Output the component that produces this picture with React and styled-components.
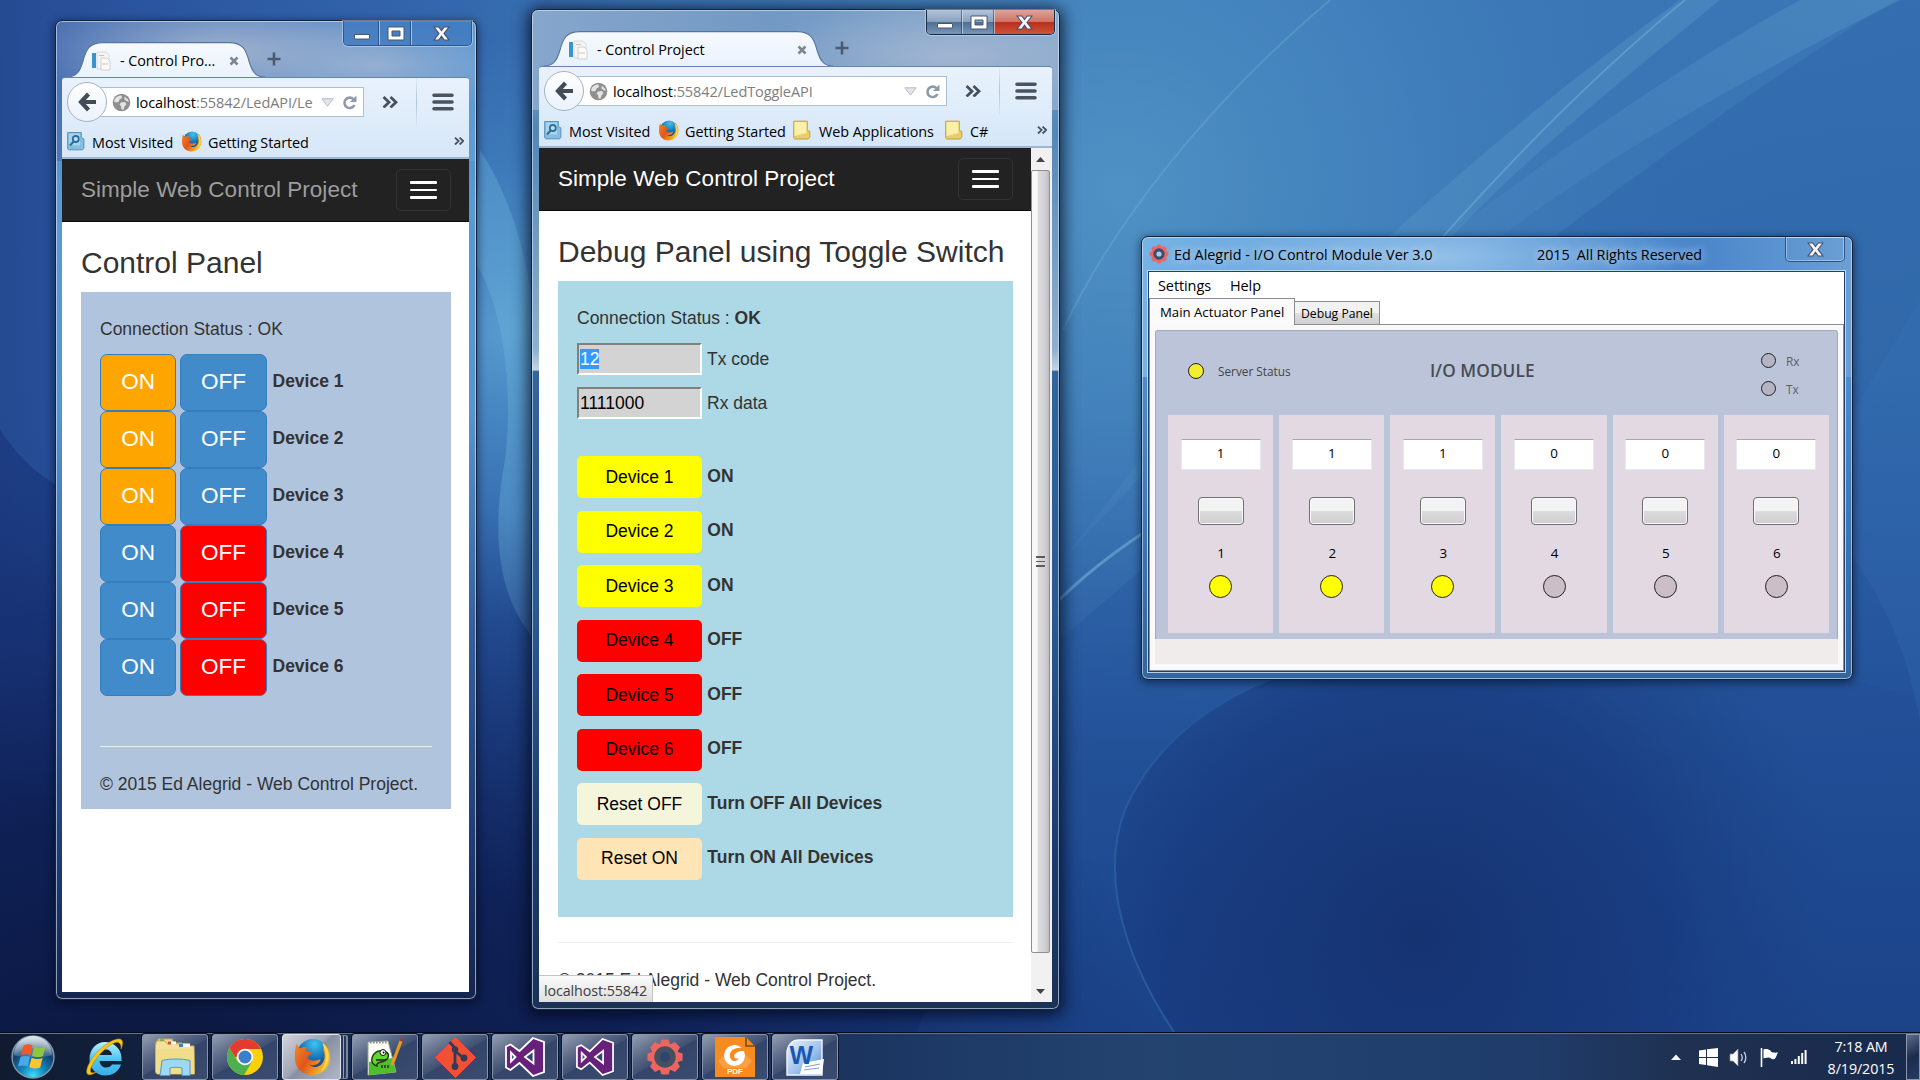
import React from "react";
import styled, { createGlobalStyle, css } from "styled-components";

const GlobalStyle = createGlobalStyle`
  *, *::before, *::after { box-sizing: border-box; }
  html, body { margin: 0; padding: 0; overflow: hidden; background: #12275f; }
  svg { display: block; flex: none; }
`;

const uiFont = css`
  font-family: "Open Sans", "Noto Sans", sans-serif;
`;
const webFont = css`
  font-family: "Liberation Sans", Arial, sans-serif;
`;

/* ---------- desktop ---------- */

const Desktop = styled.div`
  position: relative;
  width: 1920px;
  height: 1080px;
  overflow: hidden;
  display: flex;
  flex-direction: column;
`;

const WallpaperSvg = styled.svg`
  position: absolute;
  inset: 0;
`;

const WorkArea = styled.main`
  position: relative;
  flex: 1;
  min-height: 0;
`;

function Wallpaper() {
  return (
    <WallpaperSvg width="1920" height="1080" viewBox="0 0 1920 1080">
      <defs>
        <linearGradient id="wpBase" x1="0" y1="0" x2="0" y2="1">
          <stop offset="0" stopColor="#3a75b5" />
          <stop offset=".35" stopColor="#3873b2" />
          <stop offset=".62" stopColor="#28589e" />
          <stop offset=".85" stopColor="#1b4388" />
          <stop offset="1" stopColor="#163473" />
        </linearGradient>
        <linearGradient id="wpLeft" x1="0" y1="0" x2="1" y2="0">
          <stop offset="0" stopColor="#23468f" stopOpacity=".9" />
          <stop offset=".6" stopColor="#284f9f" stopOpacity=".5" />
          <stop offset="1" stopColor="#25499a" stopOpacity="0" />
        </linearGradient>
        <radialGradient id="wpGlow" gradientUnits="userSpaceOnUse" cx="1120" cy="190" r="560">
          <stop offset="0" stopColor="#5fa5cf" stopOpacity=".6" />
          <stop offset=".5" stopColor="#4f94c8" stopOpacity=".38" />
          <stop offset="1" stopColor="#3f7dbd" stopOpacity="0" />
        </radialGradient>
        <radialGradient id="wpMid" gradientUnits="userSpaceOnUse" cx="505" cy="330" r="290">
          <stop offset="0" stopColor="#65b0dc" stopOpacity=".7" />
          <stop offset=".6" stopColor="#4b93cd" stopOpacity=".35" />
          <stop offset="1" stopColor="#4b93cd" stopOpacity="0" />
        </radialGradient>
        <radialGradient
          id="wpNavy"
          gradientUnits="userSpaceOnUse"
          cx="0"
          cy="0"
          r="1"
          gradientTransform="translate(150 1090) scale(1020 620)"
        >
          <stop offset="0" stopColor="#0a163c" />
          <stop offset=".45" stopColor="#0d1d50" stopOpacity=".9" />
          <stop offset="1" stopColor="#12296a" stopOpacity="0" />
        </radialGradient>
        <radialGradient id="wpDisc" gradientUnits="userSpaceOnUse" cx="1420" cy="930" r="420">
          <stop offset="0" stopColor="#142f6c" stopOpacity=".85" />
          <stop offset=".6" stopColor="#17377a" stopOpacity=".65" />
          <stop offset="1" stopColor="#1c4389" stopOpacity=".15" />
        </radialGradient>
        <linearGradient id="wpDiscEdge" x1="0" y1="1" x2="1" y2="0">
          <stop offset="0" stopColor="#3a76bb" stopOpacity=".55" />
          <stop offset="1" stopColor="#3a76bb" stopOpacity="0" />
        </linearGradient>
        <linearGradient id="wpSweep" x1="0" y1="0" x2=".3" y2="1">
          <stop offset="0" stopColor="#2258a0" stopOpacity=".1" />
          <stop offset="1" stopColor="#1f4d96" stopOpacity=".5" />
        </linearGradient>
        <linearGradient id="wpRay" x1="1" y1="0" x2="0" y2="1">
          <stop offset="0" stopColor="#7cc0dd" stopOpacity=".2" />
          <stop offset="1" stopColor="#7cc0dd" stopOpacity=".05" />
        </linearGradient>
      </defs>
      <rect width="1920" height="1080" fill="url(#wpBase)" />
      <rect width="620" height="1080" fill="url(#wpLeft)" />
      <rect width="1920" height="1080" fill="url(#wpGlow)" />
      <rect width="1000" height="800" fill="url(#wpMid)" />
      <path d="M480 150 C510 195 530 260 535 330 L535 640 C500 600 490 540 505 460 C515 380 500 300 474 260 Z" fill="#71b8e0" opacity=".35" />
      <path d="M0 430 C20 460 40 475 56 485 L56 1080 L0 1080 Z" fill="#12296a" opacity=".4" />
      <path d="M1060 640 C1290 440 1620 170 1895 0 L1920 0 L1920 1080 L900 1080 Z" fill="url(#wpSweep)" />
      <path d="M1063 560 C1180 430 1440 170 1680 0 L1720 0 C1560 130 1440 230 1380 330 L1240 330 Z" fill="url(#wpRay)" />
      <path d="M1445 237 C1560 150 1690 60 1800 0 L1900 0 C1760 70 1600 160 1500 237 Z" fill="url(#wpRay)" />
      <path d="M1440 240 C1520 150 1600 70 1685 0" stroke="#86c4e2" strokeWidth="2" opacity=".35" fill="none" />
      <path d="M1330 0 C1200 110 1110 230 1063 330" stroke="#86c4e2" strokeWidth="2" opacity=".25" fill="none" />
      <path d="M1059 600 C1100 560 1140 535 1170 515" stroke="#7fb9de" strokeWidth="3" opacity=".5" fill="none" />
      <rect width="1180" height="1080" fill="url(#wpNavy)" />
      <path d="M1340 660 C1240 680 1160 730 1125 810 C1095 890 1135 990 1210 1080 L1920 1080 L1920 700 C1780 650 1500 620 1340 660 Z" fill="url(#wpDisc)" />
      <path d="M1340 660 C1240 680 1160 730 1125 810 C1095 890 1135 990 1210 1080" stroke="url(#wpDiscEdge)" strokeWidth="2" fill="none" />
      <path d="M1800 500 C1870 560 1905 640 1920 720 L1920 300 Z" fill="#3b79bd" opacity=".2" />
    </WallpaperSvg>
  );
}

/* ---------- glass window ---------- */

const Glass = styled.section`
  position: absolute;
  left: ${(p) => p.$x}px;
  top: ${(p) => p.$y}px;
  width: ${(p) => p.$w}px;
  height: ${(p) => p.$h}px;
  display: flex;
  flex-direction: column;
  padding: 0 7px 7px ${(p) => p.$padLeft}px;
  border: 1px solid #13213c;
  border-radius: 7px;
  background: ${(p) => p.$glass};
  box-shadow: inset 0 0 0 1px rgba(215, 232, 248, 0.62), 0 2px ${(p) => (p.$active ? 16 : 8)}px
    ${(p) => (p.$active ? 3 : 1)}px rgba(0, 5, 20, ${(p) => (p.$active ? 0.75 : 0.5)});
`;

const TitleBar = styled.header`
  height: 56px;
  flex: none;
  display: flex;
  align-items: flex-end;
  padding-left: ${(p) => p.$pad}px;
`;

const Controls = styled.div`
  display: flex;
  align-self: flex-start;
  width: 129px;
  height: 25px;
  margin: 0 -3px 0 auto;
  border: 1px solid ${(p) => (p.$active ? "#1c2b44" : "#2f568f")};
  border-top: 0;
  border-radius: 0 0 5px 5px;
  overflow: hidden;
  box-shadow: 0 0 0 1px rgba(220, 235, 250, 0.45);
`;

const ControlButton = styled.div`
  width: ${(p) => p.$w}px;
  display: flex;
  align-items: center;
  justify-content: center;
  border-left: ${(p) => (p.$first ? "0" : "1px solid rgba(220,235,250,.6)")};
  background: ${(p) =>
    p.$kind === "hot"
      ? "linear-gradient(#dfa39b 0, #cf7465 48%, #bb2f1c 52%, #cc5439 100%)"
      : p.$kind === "active"
      ? "linear-gradient(#b3c4d8 0, #8aa2bf 48%, #4f7096 52%, #7796b8 100%)"
      : "rgba(58,117,190,.75)"};
  & + & {
    box-shadow: -1px 0 0 rgba(20, 40, 80, 0.5);
  }
`;

function WindowControls({ active }) {
  const kind = active ? "active" : "idle";
  return (
    <Controls $active={active}>
      <ControlButton $w={35} $first $kind={kind}>
        <svg width="18" height="16" viewBox="0 0 18 16">
          <rect x="1.5" y="9.5" width="15" height="4.500" rx=".5" fill="#fff" stroke="#4a5670" />
        </svg>
      </ControlButton>
      <ControlButton $w={32} $kind={kind}>
        <svg width="18" height="15" viewBox="0 0 18 15">
          <path fillRule="evenodd" d="M1 1H17V14H1ZM5 5V10H13V5Z" fill="#fff" stroke="#4a5670" />
        </svg>
      </ControlButton>
      <ControlButton $w={60} $kind={active ? "hot" : "idle"}>
        <CloseGlyph />
      </ControlButton>
    </Controls>
  );
}

function CloseGlyph() {
  return (
    <svg width="17" height="15" viewBox="0 0 17 15">
      <path
        d="M1 1H5.8L8.5 4.6 11.2 1H16L11 7.4 16 14H11.2L8.5 10.2 5.8 14H1L6 7.4Z"
        fill="#f7f7fa"
        stroke="#4a5068"
        strokeWidth="1.1"
      />
    </svg>
  );
}

/* ---------- browser chrome ---------- */

const TabBox = styled.div`
  position: relative;
  width: ${(p) => p.$w}px;
  height: 35px;
  display: flex;
  align-items: center;
  padding: 3px 26px 0 24px;
`;

const TabShape = styled.svg`
  position: absolute;
  left: 0;
  top: 0;
`;

const TabTitle = styled.span`
  ${uiFont}
  position: relative;
  flex: 1;
  margin-left: 8px;
  font-size: 14.4px;
  letter-spacing: -0.08px;
  line-height: 20px;
  color: #000;
  white-space: pre;
`;

const PlusIcon = styled.svg`
  margin: 0 0 11px 2px;
`;

const FaviconSvg = styled.svg`
  position: relative;
`;
const TabClose = styled.svg`
  position: relative;
`;

function Tab({ width, title }) {
  const w = width;
  const d = `M0 35 C10 35 13 29 16 19 C19 8 22 .6 36 .6 H${w - 36} C${w - 22} .6 ${w - 19} 8 ${w - 16} 19 C${w - 13} 29 ${w - 10} 35 ${w} 35`;
  return (
    <TabBox $w={w}>
      <TabShape width={w} height="36" viewBox={`0 0 ${w} 36`}>
        <defs>
          <linearGradient id="tabFill" x1="0" y1="0" x2="0" y2="1">
            <stop offset="0" stopColor="#f6fafe" />
            <stop offset="1" stopColor="#e9f2fc" />
          </linearGradient>
        </defs>
        <path d={`${d} V36 H0Z`} fill="url(#tabFill)" />
        <path d={d} fill="none" stroke="#57749e" strokeWidth="1.1" />
      </TabShape>
      <FaviconSvg width="21" height="20" viewBox="0 0 21 20">
        <rect x="1" y="2" width="4" height="15" fill="#3c92cf" />
        <path d="M6 1h9l3 3v14H6z" fill="#f4f4f2" stroke="#d3d3d0" strokeWidth=".8" />
        <path d="M10 7h6l3 3v9h-9z" fill="#fafaf8" stroke="#c9c9c7" strokeWidth=".8" />
        <path d="M8 4.500h5M11 13h6" stroke="#c4c4c4" />
      </FaviconSvg>
      <TabTitle>{title}</TabTitle>
      <TabClose width="10" height="10" viewBox="0 0 10 10">
        <path d="M1.5 1.5L8.5 8.5M8.5 1.5L1.5 8.5" stroke="#7b8794" strokeWidth="2.6" />
      </TabClose>
    </TabBox>
  );
}

const Content = styled.div`
  flex: 1;
  min-height: 0;
  display: flex;
  flex-direction: column;
  position: relative;
`;

const Chrome = styled.div`
  flex: none;
  height: 82px;
  padding: 4px 0 0 5px;
  border-top: 1px solid #6784ac;
  border-bottom: 2px solid #9db7d3;
  border-radius: 3px 3px 0 0;
  background: linear-gradient(#e9f2fc, #d6e7f8);
`;

const NavRow = styled.div`
  height: 40px;
  display: flex;
  align-items: center;
`;

const BackButton = styled.div`
  position: relative;
  z-index: 1;
  width: 40px;
  height: 40px;
  flex: none;
  display: flex;
  align-items: center;
  justify-content: center;
  border: 1px solid #a3b3c8;
  border-radius: 50%;
  background: linear-gradient(#fff, #eaf2fb);
`;

const UrlBox = styled.div`
  ${uiFont}
  width: ${(p) => p.$w}px;
  height: 30px;
  margin-left: -7px;
  padding: 0 6px 0 11px;
  display: flex;
  align-items: center;
  border: 1px solid #aebdcf;
  background: #fff;
  font-size: 14.5px;
  letter-spacing: -0.09px;
  color: #7d7d7d;
`;

const UrlText = styled.div`
  flex: 1;
  margin-left: 5px;
  padding-top: 2px;
  line-height: 20px;
  white-space: nowrap;
  overflow: hidden;
  b {
    font-weight: 400;
    color: #000;
  }
`;

const UrlIcons = styled.div`
  display: flex;
  align-items: center;
  gap: 8px;
`;

const Overflow = styled.div`
  width: 52px;
  display: flex;
  justify-content: center;
`;

const Separator = styled.div`
  width: 1px;
  align-self: stretch;
  margin: -4px 0;
  background: linear-gradient(rgba(150, 175, 205, 0.1), #b2c4da, rgba(150, 175, 205, 0.1));
`;

const MenuIcon = styled.svg`
  margin-left: 15px;
`;

const Bookmarks = styled.div`
  ${uiFont}
  height: 35px;
  display: flex;
  align-items: center;
  padding: 3px 5px 0 0;
  font-size: 14.4px;
  letter-spacing: -0.06px;
  color: #000;
  white-space: nowrap;
`;

const Bookmark = styled.div`
  width: ${(p) => p.$w}px;
  display: flex;
  align-items: center;
  gap: ${(p) => p.$gap}px;
  line-height: 20px;
  span {
    padding-top: 3px;
  }
`;

const Spacer = styled.div`
  flex: 1;
`;

function Chevrons({ size }) {
  const w = size;
  return (
    <svg width={w} height={w * 0.78} viewBox="0 0 16 12.5">
      <path d="M1.5 1L7 6.25 1.5 11.5M8.5 1L14 6.25 8.5 11.5" fill="none" stroke="#46505e" strokeWidth="2.8" />
    </svg>
  );
}

function GlobeIcon() {
  return (
    <svg width="19" height="19" viewBox="0 0 19 19">
      <circle cx="9.5" cy="9.5" r="8.8" fill="#8f8f8f" />
      <path d="M3 5.5C5 3 8 2.2 9.5 2.5L10 5 7.5 6.5 6.5 9 4 9.5 2 8.5ZM9 9.5L13 9 14.5 11 12.5 13.5 11.5 16.8 9.5 16.5 9 13 7.5 11.5ZM12.5 3.5L16 6.5 16.8 9 14.5 8 12.5 6.5Z" fill="#e4e4e4" />
    </svg>
  );
}

function FirefoxIcon({ size = 21, id = "ff" }) {
  return (
    <svg width={size} height={size} viewBox="0 0 40 40">
      <defs>
        <radialGradient id={`${id}b`} cx=".55" cy=".15" r=".9">
          <stop offset="0" stopColor="#3fc3f0" />
          <stop offset=".5" stopColor="#1673b9" />
          <stop offset="1" stopColor="#0b2f6c" />
        </radialGradient>
        <linearGradient id={`${id}o`} x1="0" y1="0" x2="1" y2=".6">
          <stop offset="0" stopColor="#f08a24" />
          <stop offset=".5" stopColor="#e2551c" />
          <stop offset="1" stopColor="#f7c22c" />
        </linearGradient>
      </defs>
      <circle cx="21" cy="18" r="17" fill={`url(#${id}b)`} />
      <path
        d="M4 6C5 9 6 10 8 11 10 9 14 9 16 10 14 11 13 13 14 14 17 14 20 15 20 16 19 18 17 18 16 19 15 21 17 24 22 24 26 24 27 22 29 23 28 28 21 30 17 28 22 33 31 30 33 22 34 17 32 13 31 10 34 12 36 15 36 18 36 12 34 8 31 5 37 8 40 15 39 22 38 32 30 39 20 39 9 39 2 31 2 21 2 15 2 10 4 6Z"
        fill={`url(#${id}o)`}
      />
      <path d="M31 5C37 9 39 17 37 24 36 29 33 33 29 35 34 29 36 20 33 12Z" fill="#fbd948" />
    </svg>
  );
}

function MostVisitedIcon() {
  return (
    <svg width="18" height="20" viewBox="0 0 18 20">
      <path d="M.7 1.5h13.6v5.2l2.6 1.2v9.3l-1.2 1.6H1.8L.7 17.8Z" fill="#85bede" stroke="#5494bb" />
      <path d="M2 2.5h11v12H2Z" fill="#a9d5ec" />
      <circle cx="8.8" cy="8" r="3" fill="#bde2f4" stroke="#2f6f9c" strokeWidth="1.8" />
      <path d="M6.6 10.4L3 14.4" stroke="#2f6f9c" strokeWidth="2.2" />
    </svg>
  );
}

function FolderBookmarkIcon() {
  return (
    <svg width="18" height="20" viewBox="0 0 18 20">
      <path d="M.7 1.2h13.6v9l2.6 1.2v6L15 19H1.8L.7 18Z" fill="#e8cd68" stroke="#c4a33d" />
      <path d="M1.5 2h12v11L1.5 16Z" fill="#faf0ab" />
    </svg>
  );
}

function BrowserChrome({ urlWidth, path, bookmarks }) {
  return (
    <Chrome>
      <NavRow>
        <BackButton>
          <svg width="19" height="20" viewBox="0 0 19 20">
            <path d="M10.5 2L3 10L10.5 18M3.5 10H18" fill="none" stroke="#424b56" strokeWidth="4.2" />
          </svg>
        </BackButton>
        <UrlBox $w={urlWidth}>
          <GlobeIcon />
          <UrlText>
            <b>localhost</b>
            {path}
          </UrlText>
          <UrlIcons>
            <svg width="13" height="9" viewBox="0 0 13 9">
              <path d="M.8 .8H12.2L6.5 8.2Z" fill="#dfe5ea" stroke="#b5bdc7" />
            </svg>
            <svg width="15" height="15" viewBox="0 0 15 15">
              <path d="M11.4 4.200A5.200 5.200 0 1 0 12.4 10" fill="none" stroke="#8c9aa9" strokeWidth="2.6" />
              <path d="M14.5 .5V7H8Z" fill="#8c9aa9" />
            </svg>
          </UrlIcons>
        </UrlBox>
        <Overflow>
          <Chevrons size={16} />
        </Overflow>
        <Separator />
        <MenuIcon width="22" height="18" viewBox="0 0 22 18">
          <path d="M2 2.200H20M2 9H20M2 15.800H20" stroke="#4a545f" strokeWidth="3.6" strokeLinecap="round" />
        </MenuIcon>
      </NavRow>
      <Bookmarks>
        {bookmarks.map((b) => (
          <Bookmark key={b.label} $w={b.width} $gap={b.gap}>
            {b.icon}
            <span>{b.label}</span>
          </Bookmark>
        ))}
        <Spacer />
        <Chevrons size={10.5} />
      </Bookmarks>
    </Chrome>
  );
}

/* ---------- web pages ---------- */

const Viewport = styled.div`
  flex: 1;
  min-height: 0;
  display: flex;
  overflow: hidden;
  background: #fff;
`;

const Page = styled.div`
  ${webFont}
  flex: 1;
  min-width: 0;
  font-size: 17.5px;
  line-height: 25px;
  color: #333;
`;

const Navbar = styled.nav`
  height: 63px;
  display: flex;
  align-items: center;
  justify-content: space-between;
  padding: 0 18px 0 19px;
  border-bottom: 1px solid #080808;
  background: #222;
`;

const Brand = styled.a`
  font-size: 22.5px;
  line-height: 26px;
  letter-spacing: 0.02px;
  color: ${(p) => (p.$bright ? "#fff" : "#9d9d9d")};
`;

const Burger = styled.div`
  width: 55px;
  height: 42px;
  display: flex;
  flex-direction: column;
  align-items: center;
  justify-content: center;
  gap: 5px;
  border: 1px solid #333;
  border-radius: 5px;
`;

const BurgerBar = styled.div`
  width: 27px;
  height: 2.5px;
  border-radius: 1px;
  background: #fff;
`;

const Container = styled.div`
  padding: 24px 18px 0 19px;
`;

const Heading = styled.h3`
  margin: 0 0 13px;
  font-size: 30px;
  font-weight: 400;
  line-height: 33px;
  white-space: nowrap;
`;

const Panel = styled.div`
  height: ${(p) => p.$h}px;
  padding: 25px 19px 0;
  background: ${(p) => p.$bg};
`;

const Status = styled.div`
  margin-bottom: 12px;
`;

const SwitchRow = styled.div`
  height: 57px;
  display: flex;
  align-items: center;
  gap: 4px;
`;

const SwitchButton = styled.div`
  width: ${(p) => p.$w}px;
  height: 57px;
  display: flex;
  align-items: center;
  justify-content: center;
  border: 1px solid #357ebd;
  border-radius: 7px;
  background: ${(p) => p.$bg};
  font-size: 22.5px;
  line-height: 24px;
  padding-bottom: 1px;
  color: #fff;
`;

const RowLabel = styled.strong`
  padding-bottom: ${(p) => p.$lift}px;
  margin-left: ${(p) => p.$ml || 0}px;
`;

const Rule = styled.hr`
  height: 1px;
  margin: ${(p) => p.$mt}px 0 25px;
  border: 0;
  background: #eee;
`;

function Nav({ bright }) {
  return (
    <Navbar>
      <Brand $bright={bright}>Simple Web Control Project</Brand>
      <Burger>
        <BurgerBar />
        <BurgerBar />
        <BurgerBar />
      </Burger>
    </Navbar>
  );
}

const blue = "#428bca";

function ControlPage() {
  return (
    <Page>
      <Nav />
      <Container>
        <Heading>Control Panel</Heading>
        <Panel $h={517} $bg="#b0c4de">
          <Status>Connection Status : OK</Status>
          {[1, 2, 3, 4, 5, 6].map((n) => (
            <SwitchRow key={n}>
              <SwitchButton $w={76} $bg={n < 4 ? "#ffa500" : blue}>
                ON
              </SwitchButton>
              <SwitchButton $w={87} $bg={n < 4 ? blue : "#f00"}>
                OFF
              </SwitchButton>
              <RowLabel $lift={2} $ml={1.5}>
                Device {n}
              </RowLabel>
            </SwitchRow>
          ))}
          <Rule $mt={50} />
          <div>© 2015 Ed Alegrid - Web Control Project.</div>
        </Panel>
      </Container>
    </Page>
  );
}

const FieldRow = styled.div`
  height: 32px;
  margin-bottom: 12px;
  display: flex;
  align-items: center;
  gap: 5px;
`;

const Field = styled.div`
  width: 125px;
  height: 32px;
  padding: 1px 1px;
  border: 2px solid;
  border-color: #808080 #fff #fff #808080;
  background: #d3d3d3;
  color: #000;
  display: flex;
  align-items: center;
`;

const Selected = styled.span`
  height: 20px;
  line-height: 21px;
  background: #3399ff;
  color: #fff;
`;

const ToggleList = styled.div`
  margin-top: 37px;
  display: flex;
  flex-direction: column;
  gap: 12.55px;
`;

const ToggleRow = styled.div`
  height: 42px;
  display: flex;
  align-items: center;
  gap: 5px;
`;

const ToggleButton = styled.div`
  width: 125px;
  height: 42px;
  display: flex;
  align-items: center;
  justify-content: center;
  border-radius: 5px;
  background: ${(p) => p.$bg};
  color: #000;
`;

const toggles = [
  ["Device 1", "#ff0", "ON"],
  ["Device 2", "#ff0", "ON"],
  ["Device 3", "#ff0", "ON"],
  ["Device 4", "#f00", "OFF"],
  ["Device 5", "#f00", "OFF"],
  ["Device 6", "#f00", "OFF"],
  ["Reset OFF", "#f5f5dc", "Turn OFF All Devices"],
  ["Reset ON", "#ffe4b5", "Turn ON All Devices"],
];

function DebugPage() {
  return (
    <Page>
      <Nav bright />
      <Container>
        <Heading>Debug Panel using Toggle Switch</Heading>
        <Panel $h={636} $bg="#add8e6">
          <Status>
            Connection Status : <strong>OK</strong>
          </Status>
          <FieldRow>
            <Field>
              <Selected>12</Selected>
            </Field>
            Tx code
          </FieldRow>
          <FieldRow>
            <Field>1111000</Field>
            Rx data
          </FieldRow>
          <ToggleList>
            {toggles.map(([label, bg, state]) => (
              <ToggleRow key={label}>
                <ToggleButton $bg={bg}>{label}</ToggleButton>
                <RowLabel $lift={2} $ml={0.3}>
                  {state}
                </RowLabel>
              </ToggleRow>
            ))}
          </ToggleList>
        </Panel>
        <Rule $mt={25} />
        <div>© 2015 Ed Alegrid - Web Control Project.</div>
      </Container>
    </Page>
  );
}

const ScrollTrack = styled.div`
  width: 21px;
  flex: none;
  display: flex;
  flex-direction: column;
  align-items: center;
  padding-right: 2px;
  background: #f1f1f2;
`;

const ScrollArrow = styled.div`
  height: ${(p) => p.$h}px;
  display: flex;
  align-items: center;
`;

const ScrollThumb = styled.div`
  width: 19px;
  height: 783px;
  display: flex;
  flex-direction: column;
  align-items: center;
  justify-content: center;
  gap: 3px;
  border: 1px solid #8f8f92;
  border-radius: 2px;
  background: linear-gradient(90deg, #f8f8f8 0 30%, #dcdcdf 38%, #cfcfd3 80%, #bcbcc0);
`;

const Grip = styled.div`
  width: 9px;
  height: 1.5px;
  background: #5c5c60;
`;

const StatusBubble = styled.div`
  ${uiFont}
  position: absolute;
  left: 0;
  bottom: 0;
  width: 114px;
  height: 27px;
  padding: 5px 0 0 5px;
  border: 1px solid #c4c4c4;
  border-width: 1px 1px 0 0;
  border-top-right-radius: 2px;
  background: linear-gradient(#fbfbfb, #dedede);
  font-size: 14.3px;
  letter-spacing: -0.1px;
  line-height: 20px;
  color: #3c3c3c;
`;

/* ---------- I/O module window ---------- */

const IoTitle = styled.header`
  ${uiFont}
  height: 34px;
  flex: none;
  display: flex;
  align-items: center;
  padding: 0 0 0 1px;
  font-size: 14.4px;
  color: #000;
  white-space: pre;
`;

const IoCaption = styled.span`
  width: ${(p) => p.$w}px;
  margin-left: ${(p) => p.$ml}px;
  letter-spacing: ${(p) => p.$ls}px;
  text-shadow: 0 0 8px rgba(200, 225, 250, 0.9), 0 0 14px rgba(200, 225, 250, 0.9);
`;

const IoClose = styled.div`
  width: 60px;
  height: 25px;
  margin: 0 0 0 auto;
  align-self: flex-start;
  display: flex;
  align-items: center;
  justify-content: center;
  border: 1px solid rgba(32, 66, 115, 0.8);
  border-top: 0;
  border-radius: 0 0 5px 5px;
  box-shadow: inset 0 0 0 1px rgba(220, 235, 250, 0.45);
`;

const IoBody = styled.div`
  ${uiFont}
  flex: 1;
  min-height: 0;
  display: flex;
  flex-direction: column;
  border: 1px solid #24406c;
  box-shadow: 0 0 0 1px rgba(205, 228, 248, 0.85);
  background: #fff;
  color: #000;
`;

const IoMenu = styled.div`
  height: 26px;
  flex: none;
  display: flex;
  gap: 19px;
  padding: 4px 0 0 9px;
  font-size: 14.5px;
  line-height: 20px;
  letter-spacing: -0.1px;
`;

const IoTabs = styled.div`
  height: 27px;
  flex: none;
  display: flex;
  align-items: flex-end;
  box-shadow: inset 0 -1px 0 #8c8e94;
  line-height: 18px;
  white-space: nowrap;
`;

const IoTab = styled.div`
  width: ${(p) => p.$w}px;
  height: ${(p) => (p.$current ? 27 : 24)}px;
  padding: ${(p) => (p.$current ? "4px 0 0 10px" : "3px 0 0 6px")};
  border: 1px solid #8c8e94;
  border-bottom: ${(p) => (p.$current ? "0" : "1px solid #8c8e94")};
  border-left-width: ${(p) => (p.$current ? 1 : 0)}px;
  background: ${(p) => (p.$current ? "#fafafb" : "linear-gradient(#f2f2f2 0 48%, #e0e0e0 52%, #cfcfcf)")};
  font-size: ${(p) => (p.$current ? 13.2 : 12.2)}px;
`;

const IoPage = styled.div`
  flex: 1;
  min-height: 0;
  padding: 5px 5px 6px;
  border: 1px solid #8c8e94;
  border-top: 0;
  background: #f9f9fa;
  display: flex;
  flex-direction: column;
`;

const IoPanel = styled.div`
  flex: 1;
  border: 1px solid #a3a9bd;
  border-bottom: 0;
  border-radius: 3px 3px 0 0;
  background: #bbc4d8;
  padding: 0 8px 6px 12px;
  display: flex;
  flex-direction: column;
`;

const IoFooter = styled.div`
  height: 25px;
  flex: none;
  background: #f0ecec;
`;

const IoHeader = styled.div`
  height: 84px;
  display: grid;
  grid-template-columns: 262px 1fr 68px;
  font-size: 11.8px;
  color: #444;
`;

const ServerStatus = styled.div`
  display: flex;
  align-items: center;
  gap: 14px;
  padding: 0 0 4px 20px;
`;

const IoHeading = styled.div`
  padding-top: 28px;
  font-size: 17.2px;
  font-weight: 600;
  line-height: 24px;
  letter-spacing: 0.1px;
  color: #484c55;
  white-space: nowrap;
`;

const Links = styled.div`
  padding-top: 20px;
  display: flex;
  flex-direction: column;
  gap: 9px;
`;

const LinkRow = styled.div`
  height: 19px;
  display: flex;
  align-items: center;
  gap: 10px;
  font-size: 11.8px;
  color: #5a5f6c;
`;

const Lamp = styled.div`
  width: ${(p) => p.$d}px;
  height: ${(p) => p.$d}px;
  flex: none;
  border: 1.5px solid #222;
  border-radius: 50%;
  background: ${(p) => p.$bg};
`;

const Channels = styled.div`
  flex: 1;
  display: grid;
  grid-template-columns: repeat(6, 1fr);
  gap: 6px;
`;

const Channel = styled.div`
  display: flex;
  flex-direction: column;
  align-items: center;
  padding-top: 24px;
  background: #e3d9e3;
  font-size: 13.4px;
`;

const ChannelValue = styled.div`
  width: 80px;
  height: 31px;
  border: 1px solid #e8e6ee;
  border-top-color: #a5a7ad;
  background: #fff;
  text-align: center;
  line-height: 27px;
`;

const ChannelKey = styled.div`
  width: 46px;
  height: 28px;
  margin: 27px 0 18px;
  border: 1px solid #707070;
  border-radius: 4px;
  background: linear-gradient(#f3f3f3 0 50%, #dcdcdc 50%, #cecece);
  box-shadow: inset 0 0 0 1px #fafafa;
`;

const ChannelNumber = styled.div`
  padding-left: 1px;
  line-height: 20px;
  margin-bottom: 12px;
`;

function IoWindow() {
  return (
    <Glass
      $x={1141}
      $y={236}
      $w={712}
      $h={444}
      $padLeft={6}
      $glass="radial-gradient(ellipse 240px 60px at 300px 20px, rgba(170,208,240,.7), transparent), linear-gradient(90deg, rgba(120,180,228,.95), rgba(95,158,218,.9) 35%, rgba(70,130,200,.85) 78%, rgba(110,160,212,.9)) 0 0 / 100% 140px no-repeat, linear-gradient(#5a9bd6 0, #4c8dcc 32%, #3a74b4 70%, #33659f)"
    >
      <IoTitle>
        <svg width="20" height="20" viewBox="0 0 40 40">
          <GearShape inner="#3f4c6b" hole="#a9cbe8" />
        </svg>
        <IoCaption $w={362} $ml={5} $ls={0}>
          Ed Alegrid - I/O Control Module Ver 3.0
        </IoCaption>
        <IoCaption $w={180} $ml={1} $ls={-0.09}>
          {"2015  All Rights Reserved"}
        </IoCaption>
        <IoClose>
          <CloseGlyph />
        </IoClose>
      </IoTitle>
      <IoBody>
        <IoMenu>
          <span>Settings</span>
          <span>Help</span>
        </IoMenu>
        <IoTabs>
          <IoTab $w={146} $current>
            Main Actuator Panel
          </IoTab>
          <IoTab $w={85}>Debug Panel</IoTab>
        </IoTabs>
        <IoPage>
          <IoPanel>
            <IoHeader>
              <ServerStatus>
                <Lamp $d={16} $bg="#f2ef2e" />
                Server Status
              </ServerStatus>
              <IoHeading>I/O MODULE</IoHeading>
              <Links>
                <LinkRow>
                  <Lamp $d={15} $bg="#b5b4c4" />
                  Rx
                </LinkRow>
                <LinkRow>
                  <Lamp $d={15} $bg="#b5b4c4" />
                  Tx
                </LinkRow>
              </Links>
            </IoHeader>
            <Channels>
              {[1, 2, 3, 4, 5, 6].map((n) => (
                <Channel key={n}>
                  <ChannelValue>{n < 4 ? 1 : 0}</ChannelValue>
                  <ChannelKey />
                  <ChannelNumber>{n}</ChannelNumber>
                  <Lamp $d={23} $bg={n < 4 ? "#ff0" : "#cbbec6"} />
                </Channel>
              ))}
            </Channels>
          </IoPanel>
          <IoFooter />
        </IoPage>
      </IoBody>
    </Glass>
  );
}

/* ---------- taskbar ---------- */

const TaskbarRow = styled.footer`
  position: relative;
  height: 48px;
  flex: none;
  display: flex;
  align-items: flex-start;
  padding-top: 1px;
  border-top: 1px solid #050b1a;
  box-shadow: inset 0 1px 0 #62728e;
  background: linear-gradient(90deg, #101b30 0, #132446 12%, #1b3561 45%, #244470 60%, #1f3c6a 80%, #1f3050 88%, #182a4c);
`;

const StartOrb = styled.div`
  width: 66px;
  height: 46px;
  display: flex;
  align-items: center;
  justify-content: center;
`;

const PinnedIcon = styled.div`
  width: 76px;
  height: 46px;
  display: flex;
  align-items: center;
  justify-content: center;
`;

const TaskButton = styled.div`
  width: ${(p) => (p.$stacked ? 59 : 66)}px;
  height: 46px;
  margin-right: ${(p) => (p.$stacked ? 11 : 4)}px;
  display: flex;
  align-items: center;
  justify-content: center;
  border: 1px solid ${(p) => (p.$stacked ? "#dfe5ee" : "#8793ab")};
  border-radius: 3px;
  background: ${(p) =>
    p.$stacked
      ? "linear-gradient(135deg, #d2d5dd, #9ea5b4 45%, #8790a3 50%, #b0b7c5)"
      : "linear-gradient(150deg, #939eb2 0, #5a6886 32%, #3f5072 50%, #33456a 51%, #3a4c6e)"};
  box-shadow: ${(p) =>
    p.$stacked ? "3px 0 0 -1px #27365a, 4px 0 0 -1px #97a2b6, 7px 0 0 -2px #27365a, 8px 0 0 -1px #76839b" : "0 0 0 1px #0b1630"};
`;

const Tray = styled.div`
  margin-left: auto;
  height: 46px;
  display: flex;
  align-items: center;
`;

const TrayIcons = styled.div`
  display: flex;
  align-items: center;
  width: 145px;
`;

const Clock = styled.div`
  ${uiFont}
  width: 90px;
  padding: 1px 0 0 0;
  font-size: 14.3px;
  letter-spacing: -0.1px;
  line-height: 22px;
  text-align: center;
  color: #fff;
`;

const ShowDesktop = styled.div`
  width: 14px;
  height: 46px;
  border: 1px solid #8a96ab;
  background: linear-gradient(150deg, #5e6c88, #1b2b4c 50%, #263b63);
`;

const TrayGap = styled.div`
  width: ${(p) => p.$w}px;
  flex: none;
`;

function GearShape({ inner, hole }) {
  return (
    <g>
      {[0, 45, 90, 135].map((a) => (
        <path key={a} d="M16.2 1.5H23.8L26 9V31L23.8 38.5H16.2L14 31V9Z" fill="#ee6560" transform={`rotate(${a} 20 20)`} />
      ))}
      <circle cx="20" cy="20" r="14.5" fill="#ee6560" />
      <circle cx="20" cy="20" r="11.3" fill={inner} />
      <circle cx="20" cy="20" r="5.2" fill={hole} />
    </g>
  );
}

function VisualStudio({ size }) {
  return (
    <svg width={size} height={size} viewBox="0 0 40 40">
      <path
        fillRule="evenodd"
        d="M28 1L39 5V35L28 39L14.5 26L5.5 33L1 30.5V9.5L5.5 7.5L14.5 14ZM28.5 13.5L20 20L28.5 26.5ZM6 15.5V24.5L10.5 20Z"
        fill="#68217a"
        stroke="#fff"
        strokeWidth="1.8"
      />
    </svg>
  );
}

const PdfTile = styled.div`
  width: 40px;
  height: 40px;
  display: flex;
  flex-direction: column;
  align-items: center;
  background: #f68b1f;
  clip-path: polygon(0 0, 77% 0, 100% 23%, 100% 100%, 0 100%);
`;

const PdfLabel = styled.span`
  ${webFont}
  margin-top: -1px;
  font-size: 8px;
  font-weight: 700;
  line-height: 9px;
  color: #fff;
`;

function FoxitIcon() {
  return (
    <PdfTile>
      <svg width="40" height="31" viewBox="0 0 40 31">
        <path d="M20 7L37 24 31 31H9L3 24Z" fill="#fa9f44" />
        <path d="M31 0V9H40" fill="none" stroke="#7a4a16" strokeWidth="1.6" />
        <circle cx="19.5" cy="18.5" r="10.5" fill="#fff" />
        <path d="M28 11C19 10 14 14 15 20 16 25 22 25 24 21 20 23 18 20 20 17 22 14.5 25 14 30 14Z" fill="#f68b1f" />
      </svg>
      <PdfLabel>PDF</PdfLabel>
    </PdfTile>
  );
}

const WordTile = styled.div`
  position: relative;
  width: 39px;
  height: 37px;
`;

const WordLetter = styled.span`
  ${webFont}
  position: absolute;
  left: 4px;
  top: 3px;
  font-size: 25px;
  font-weight: 700;
  line-height: 27px;
  color: #1857b4;
`;

function WordIcon() {
  return (
    <WordTile>
      <svg width="39" height="37" viewBox="0 0 39 37">
        <defs>
          <linearGradient id="wrd" x1="0" y1="0" x2="1" y2="1">
            <stop offset="0" stopColor="#e9f2fc" />
            <stop offset=".5" stopColor="#a9c8ef" />
            <stop offset="1" stopColor="#4c86d0" />
          </linearGradient>
        </defs>
        <path d="M1 12C2 6 6 1 13 1H36V36H1Z" fill="url(#wrd)" stroke="#f2f7fd" strokeWidth="1.4" />
        <path d="M17 24L38 20 36 35H14Z" fill="#fff" />
        <path d="M19 28L34 25M18 31L33 29" stroke="#7b9fd0" />
      </svg>
      <WordLetter>W</WordLetter>
    </WordTile>
  );
}

function Taskbar() {
  return (
    <TaskbarRow>
      <StartOrb>
        <svg width="44" height="44" viewBox="0 0 44 44">
          <defs>
            <radialGradient id="orb" cx=".5" cy=".95" r=".95">
              <stop offset="0" stopColor="#3fe0ff" />
              <stop offset=".3" stopColor="#1487bd" />
              <stop offset=".65" stopColor="#12406c" />
              <stop offset="1" stopColor="#8ea6ba" />
            </radialGradient>
            <linearGradient id="orbShine" x1="0" y1="0" x2="0" y2="1">
              <stop offset="0" stopColor="#fff" stopOpacity=".75" />
              <stop offset="1" stopColor="#fff" stopOpacity=".15" />
            </linearGradient>
          </defs>
          <circle cx="22" cy="22" r="21" fill="url(#orb)" stroke="#8097ad" strokeWidth="1.4" />
          <path d="M3 20A19 19 0 0 1 41 20C34 23 10 23 3 20Z" fill="url(#orbShine)" />
          <path d="M12.5 10.5C16 8.5 19 9 21.7 10.5L19.4 20C16.5 18.6 13.5 18.5 10 20Z" fill="#ee5a2b" />
          <path d="M23.4 11.5C27 13.3 31 13.3 34.5 11.8L32 21C28.5 22.7 24.5 22.5 21 20.8Z" fill="#8dc63f" />
          <path d="M9.5 22C13 20.5 16 20.6 19 22L16.6 31.5C13.5 30 10.5 30 7 31.5Z" fill="#4aa7e8" />
          <path d="M20.6 22.7C24 24.3 28 24.6 31.6 23L29.2 32.5C25.6 34 21.6 33.8 18.2 32Z" fill="#fdc52c" />
        </svg>
      </StartOrb>
      <PinnedIcon>
        <svg width="40" height="40" viewBox="0 0 40 40">
          <defs>
            <linearGradient id="ieb" x1="0" y1="0" x2="0" y2="1">
              <stop offset="0" stopColor="#b8f0ff" />
              <stop offset=".5" stopColor="#52c5f3" />
              <stop offset="1" stopColor="#36aee8" />
            </linearGradient>
          </defs>
          <path
            fillRule="evenodd"
            d="M21 5C30 5 37.5 12 37.5 21V24H15.5C16 28 18.5 30.5 22 30.5C25 30.5 27 29.5 28 27.5H37C35 34 29 38.5 21.5 38.5C12 38.5 5.5 31 5.5 22C5.5 12 12.5 5 21 5ZM15.5 18H28C27.5 14.5 25 12.5 21.8 12.5C18.5 12.5 16 14.5 15.5 18Z"
            fill="url(#ieb)"
          />
          <path
            d="M37 12C39.5 6 39 2.5 35.5 2C28 1.5 13 12 6 25C1 34 2 39 7 37.5C9 37 11 36 13 34.5C9 36.5 6 36.5 6.5 33C7.5 26 19 11.5 29 6.5C34.5 3.8 37.5 6 37 12Z"
            fill="#f9c716"
            stroke="#c08a07"
            strokeWidth=".6"
          />
        </svg>
      </PinnedIcon>
      <TaskButton>
        <svg width="42" height="40" viewBox="0 0 42 40">
          <path d="M4 2H18L20 6H28V10H4Z" fill="#f1de92" stroke="#c6a94e" />
          <path d="M6 2.5H10V5.5H6Z" fill="#33a352" />
          <path d="M1.5 8.5L2.5 4H11L13 7H32L34 9H40L40.5 37H3L1.5 35Z" fill="#f5e29a" stroke="#cfae55" />
          <path d="M14 4.5H22V7.5H14Z" fill="#fff" />
          <path d="M14 4.5H17V7.5H14Z" fill="#d64a3a" />
          <path d="M25 6.5H36V10H25Z" fill="#fff" />
          <path d="M25 6.5H29V10H25Z" fill="#2f86d0" />
          <path d="M2 12H40V37H3Z" fill="#f1dc86" opacity=".8" />
          <path d="M8 23.5C16 21.5 28 21.5 36 23.5V38.5H28V31C25 30 19 30 16 31V38.5H6Z" fill="#9fd8f2" stroke="#4f9cc5" />
        </svg>
      </TaskButton>
      <TaskButton>
        <svg width="36" height="36" viewBox="0 0 40 40">
          <circle cx="20" cy="20" r="20" fill="#fdd008" />
          <path d="M2.7 10L12 25 20 29 18 40A20 20 0 0 1 2.7 10Z" fill="#4caf50" />
          <path d="M20 28L28.500 24 19 40H17Z" fill="#4caf50" />
          <path d="M2.7 10A20 20 0 0 1 37.8 11H20L12 20 9 20Z" fill="#e33b2e" />
          <circle cx="20" cy="20" r="9.2" fill="#fff" />
          <circle cx="20" cy="20" r="7.2" fill="#3d7dce" />
        </svg>
      </TaskButton>
      <TaskButton $stacked>
        <FirefoxIcon size={38} id="fft" />
      </TaskButton>
      <TaskButton>
        <svg width="38" height="38" viewBox="0 0 38 38">
          <path d="M2 4L22 3 30 34 2 37Z" fill="#fbfdf6" stroke="#9aa58e" />
          <path d="M3 24L26 20 30 34 3 37Z" fill="#4fbf2c" />
          <path d="M4 4.5H22" stroke="#888" strokeWidth="2" strokeDasharray="1.5 1.5" />
          <path d="M6 20C8 13 15 11 20 14 24 16 23 21 18 23 14 25 10 24 11 28 7 27 5 24 6 20Z" fill="#62d62d" stroke="#1c3a10" strokeWidth="1.4" />
          <circle cx="17" cy="14.5" r="3" fill="#fff" stroke="#111" />
          <circle cx="17.6" cy="14.5" r="1" />
          <path d="M10 22H20M16 27V30M19 27V30M22 27V30" stroke="#222" strokeWidth="1.3" />
          <path d="M35 3L26 27" stroke="#e59a22" strokeWidth="3.2" />
          <path d="M35 3L36.3 .5" stroke="#b0352b" strokeWidth="3.2" />
        </svg>
      </TaskButton>
      <TaskButton>
        <svg width="41" height="41" viewBox="0 0 41 41">
          <path d="M20.5 .5L40.5 20.5 20.5 40.5 .5 20.5Z" fill="#f05033" stroke="#f05033" strokeLinejoin="round" />
          <path d="M14.5 5L20 11V30M20 14L28.5 21" stroke="#343a55" strokeWidth="2.8" fill="none" />
          <circle cx="20" cy="12.5" r="3.2" fill="#343a55" />
          <circle cx="20" cy="29.5" r="3.4" fill="#343a55" />
          <circle cx="29" cy="21" r="3.4" fill="#343a55" />
        </svg>
      </TaskButton>
      <TaskButton>
        <VisualStudio size={40} />
      </TaskButton>
      <TaskButton>
        <VisualStudio size={38} />
      </TaskButton>
      <TaskButton>
        <svg width="38" height="38" viewBox="0 0 40 40">
          <GearShape inner="#44505f" hole="#2f4570" />
        </svg>
      </TaskButton>
      <TaskButton>
        <FoxitIcon />
      </TaskButton>
      <TaskButton>
        <WordIcon />
      </TaskButton>
      <Tray>
        <TrayIcons>
          <svg width="10" height="6" viewBox="0 0 10 6">
            <path d="M0 6L5 .5 10 6Z" fill="#f2f4f8" />
          </svg>
          <TrayGap $w={18} />
          <svg width="19" height="19" viewBox="0 0 19 19">
            <path d="M0 2.5L7 1.5V9H0ZM8 1.3L19 0V9H8ZM0 10H7V17L0 16ZM8 10H19V19L8 17.3Z" fill="#fff" />
          </svg>
          <TrayGap $w={11} />
          <svg width="19" height="19" viewBox="0 0 19 19">
            <path d="M1 6H4L9 1V18L4 13H1Z" fill="#fff" stroke="#8b919c" strokeWidth=".8" />
            <path d="M12 6C13.4 8 13.4 11 12 13M15 4C17.4 7 17.4 12 15 15" stroke="#c9cfd8" strokeWidth="1.3" fill="none" />
          </svg>
          <TrayGap $w={12} />
          <svg width="19" height="19" viewBox="0 0 19 19">
            <path d="M1.5 0V19" stroke="#fff" strokeWidth="1.6" />
            <path d="M3.5 1.5C6 .5 8.5 1.2 10.5 2.6C11 4 12 5 18 4.5C16.5 6.5 16.5 9.5 14.5 11C11.5 12 10.5 9.5 8.5 9.6L3.5 10.2Z" fill="#fff" />
          </svg>
          <TrayGap $w={12} />
          <svg width="16" height="14" viewBox="0 0 16 14">
            <path d="M0 11H2V14H0ZM3.4 9H5.4V14H3.4ZM6.8 6H8.8V14H6.8ZM10.2 3H12.2V14H10.2ZM13.6 0H15.6V14H13.6Z" fill="#fff" />
          </svg>
        </TrayIcons>
        <Clock>
          <div>7:18 AM</div>
          <div>8/19/2015</div>
        </Clock>
        <ShowDesktop />
      </Tray>
    </TaskbarRow>
  );
}

/* ---------- assembly ---------- */

function Plus() {
  return (
    <PlusIcon width="14" height="14" viewBox="0 0 14 14">
      <path d="M7 .5V13.5M.5 7H13.5" stroke="#4d5b70" strokeWidth="2.6" />
    </PlusIcon>
  );
}

const baseBookmarks = (id) => [
  { label: "Most Visited", width: 114, gap: 7, icon: <MostVisitedIcon /> },
  { label: "Getting Started", width: 135, gap: 6, icon: <FirefoxIcon size={21} id={id} /> },
];

export default function App() {
  return (
    <>
      <GlobalStyle />
      <Desktop>
        <Wallpaper />
        <WorkArea>
          <Glass
            $x={55}
            $y={20}
            $w={422}
            $h={980}
            $padLeft={6}
            $glass="radial-gradient(ellipse 190px 60px at 170px 30px, rgba(165,181,207,.9), transparent), radial-gradient(ellipse 150px 50px at 320px 45px, rgba(160,182,212,.8), transparent), linear-gradient(90deg, rgba(74,108,174,.75), rgba(100,160,215,.75)) 0 0 / 100% 140px no-repeat, linear-gradient(#4d7bbb 0, #5a9ad3 18%, #5795d0 40%, #33619f 62%, #1f3a76 85%, #15254f)"
          >
            <TitleBar $pad={5}>
              <Tab width={198} title="- Control Pro..." />
              <Plus />
              <WindowControls />
            </TitleBar>
            <Content>
              <BrowserChrome urlWidth={264} path=":55842/LedAPI/Le" bookmarks={baseBookmarks("ffa")} />
              <Viewport>
                <ControlPage />
              </Viewport>
            </Content>
          </Glass>
          <Glass
            $x={531}
            $y={9}
            $w={529}
            $h={1001}
            $padLeft={7}
            $active
            $glass="radial-gradient(ellipse 190px 55px at 420px 45px, rgba(165,183,210,.9), transparent), linear-gradient(90deg, #86a6cc, #7299c4 45%, #86a9cd) 0 0 / 100% 100px no-repeat, linear-gradient(#86a9cd 0, #5486b6 12%, #8fb0d0 34%, #c3d3e3 36%, #32659c 36.2%, #2b5990 60%, #1c3a6c 85%, #1a3158)"
          >
            <TitleBar $pad={5}>
              <Tab width={289} title="- Control Project" />
              <Plus />
              <WindowControls active />
            </TitleBar>
            <Content>
              <BrowserChrome
                urlWidth={370}
                path=":55842/LedToggleAPI"
                bookmarks={[
                  ...baseBookmarks("ffb"),
                  { label: "Web Applications", width: 152, gap: 8, icon: <FolderBookmarkIcon /> },
                  { label: "C#", width: 50, gap: 7, icon: <FolderBookmarkIcon /> },
                ]}
              />
              <Viewport>
                <DebugPage />
                <ScrollTrack>
                  <ScrollArrow $h={22}>
                    <svg width="9" height="5" viewBox="0 0 9 5">
                      <path d="M0 5L4.5 0 9 5Z" fill="#444" />
                    </svg>
                  </ScrollArrow>
                  <ScrollThumb>
                    <Grip />
                    <Grip />
                    <Grip />
                  </ScrollThumb>
                  <Spacer />
                  <ScrollArrow $h={22}>
                    <svg width="9" height="5" viewBox="0 0 9 5">
                      <path d="M0 0L4.5 5 9 0Z" fill="#444" />
                    </svg>
                  </ScrollArrow>
                </ScrollTrack>
              </Viewport>
              <StatusBubble>localhost:55842</StatusBubble>
            </Content>
          </Glass>
          <IoWindow />
        </WorkArea>
        <Taskbar />
      </Desktop>
    </>
  );
}
